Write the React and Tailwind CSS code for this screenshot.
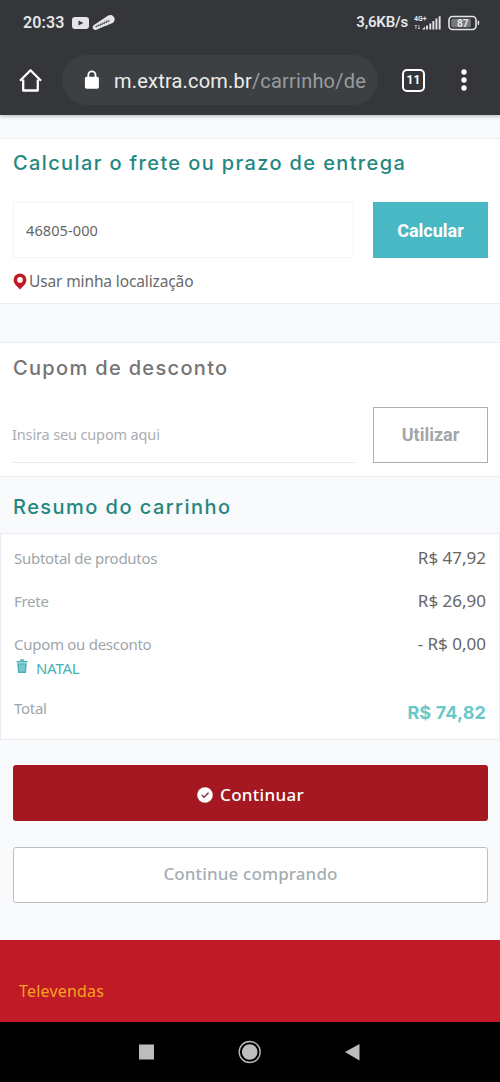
import { useState } from 'react';

const summary = [
    { label: 'Subtotal de produtos', value: 'R$ 47,92' },
    { label: 'Frete', value: 'R$ 26,90' },
    { label: 'Cupom ou desconto', value: '- R$ 0,00' },
];

function StatusBar() {
    return (
        <div className="h-[45px] flex items-center pl-[23px] pr-[20px] text-[#e4e5e7] font-['Roboto',sans-serif]">
            <span className="text-[16px] font-semibold tracking-[0.1px]">20:33</span>
            <svg className="ml-[8px] w-[17px] h-[12px]" viewBox="0 0 17 12">
                <rect width="17" height="12" rx="3" fill="currentColor" />
                <path d="M6.5 3.4 11.3 6 6.5 8.6Z" fill="#35363a" />
            </svg>
            <svg className="ml-[3px] w-[24px] h-[17px]" viewBox="0 0 24 17">
                <path d="M1.6 11.3 16.2 1.5C20.1-.6 24.8 4.1 21.7 8 20.2 9.8 16.2 10.5 4.5 15.8 1.3 16.8-.7 13.2 1.6 11.3Z" fill="currentColor" />
                <path d="m3.3 12.4 1.2.7.5-1.8 1.3 1 .5-1.8 1.4 1.2.5-2 1.5 1.2.5-2.2 1.6 1.2.5-2.3 1.6 1.4.4-2.4 1.8 1.4.3-2.2" fill="none" stroke="#5b5c60" strokeWidth="1" />
            </svg>
            <span className="ml-auto text-[15px] font-semibold tracking-[-0.2px]">3,6KB/s</span>
            <svg className="ml-[6px] w-[28px] h-[16px]" viewBox="0 0 28 16" fill="currentColor">
                <text x="0" y="6.4" fontSize="7" fontWeight="700" fontFamily="Roboto">4G+</text>
                <path d="M1.9 14V10M.9 11 1.9 10l1 1M4.9 10v4M3.9 13 4.9 14l1-1" fill="none" stroke="currentColor" strokeWidth=".7" />
                <path d="M8 14.5l3-3v3ZM12 10.5h1.9v4h-1.9ZM15.3 8.5h1.9v6h-1.9ZM18.4 6h1.9V14.5h-1.9ZM21.5 3.5h1.9v11h-1.9ZM24.7 1.2h1.9V14.5h-1.9Z" />
            </svg>
            <svg className="ml-[6px] w-[32px] h-[16px]" viewBox="0 0 32 16">
                <rect x="1" y="1.5" width="27" height="13" rx="3.5" fill="none" stroke="currentColor" strokeWidth="1.6" />
                <rect x="3.3" y="3.8" width="19.5" height="8.4" rx="1.5" fill="#77787b" />
                <path d="M30.4 5.8v4" stroke="currentColor" strokeWidth="1.5" />
                <text x="14.8" y="11.5" textAnchor="middle" fontSize="10" fontWeight="700" fontFamily="Roboto" fill="currentColor">87</text>
            </svg>
        </div>
    );
}

function AddressBar() {
    return (
        <div className="h-[70px] flex items-center pl-[18px] pr-[33px] font-['Roboto',sans-serif] text-white">
            <svg className="w-[26px] h-[26px]" viewBox="0 0 26 26" fill="none" stroke="currentColor" strokeWidth="2.3" strokeLinejoin="round">
                <path d="M2 13.8 12.5 3.3 23 13.8" />
                <path d="M5.2 12.5v11h14.6v-11" />
            </svg>
            <div className="ml-[18px] w-[316px] h-[50px] rounded-full bg-[#3c4043] flex items-center pl-[22px]">
                <svg className="w-[16px] h-[20px]" viewBox="0 0 16 20">
                    <rect x=".9" y="6.7" width="14" height="12" rx="1.7" fill="currentColor" />
                    <path d="M4.3 7.5V5a3.6 3.6 0 0 1 7.2 0v2.5" fill="none" stroke="currentColor" strokeWidth="1.8" />
                </svg>
                <span className="ml-[14px] pt-[1px] text-[20px] tracking-[0.2px] whitespace-nowrap text-[#eceded]">
                    m.extra.com.br<span className="text-[#999c9e]">/carrinho/de</span>
                </span>
            </div>
            <div className="ml-[24px] w-[23px] h-[23px] rounded-[5px] border-2 border-white flex items-center justify-center text-[12px] font-bold leading-none">11</div>
            <svg className="ml-auto w-[6px] h-[22px]" viewBox="0 0 6 22" fill="currentColor">
                <circle cx="3" cy="3" r="2.7" />
                <circle cx="3" cy="11" r="2.7" />
                <circle cx="3" cy="19" r="2.7" />
            </svg>
        </div>
    );
}

function NavigationBar() {
    return (
        <nav className="h-[60px] bg-black flex justify-center items-center text-[#bdbdbd]">
            <svg className="w-[224px] h-[24px]" viewBox="0 0 224 24" fill="currentColor">
                <rect x="1" y="4.5" width="15" height="15" />
                <circle cx="111.7" cy="12" r="7.8" />
                <circle cx="111.7" cy="12" r="10.5" fill="none" stroke="currentColor" strokeWidth="1.3" />
                <path d="M207 12 221.5 4v16.5Z" />
            </svg>
        </nav>
    );
}

export default function App() {
    const [cep, setCep] = useState('46805-000');
    const [coupon, setCoupon] = useState('');

    return (
        <div className="w-full h-[1082px] overflow-hidden flex flex-col bg-[#f8fafc] font-['Noto_Sans',sans-serif]">
            <header className="relative h-[115px] shrink-0 bg-[#35363a] shadow-[0_1px_4px_rgba(0,0,0,0.3)]">
                <StatusBar />
                <AddressBar />
            </header>

            <main className="h-[825px] shrink-0 pt-[23px]">
                <section className="h-[166px] bg-white border-y border-[#eceef1] pl-[13px] pr-[12px]">
                    <h2 className="pt-[9px] h-[63px] text-[20px] leading-[30px] font-medium font-['Inter',sans-serif] text-[#25877f] tracking-[1.37px] whitespace-nowrap">
                        Calcular o frete ou prazo de entrega
                    </h2>
                    <div className="flex justify-between">
                        <input
                            value={cep}
                            onChange={e => setCep(e.target.value)}
                            className="w-[341px] h-[56px] border border-[#f6f6f6] px-[12px] text-[14.5px] tracking-[0.1px] text-[#666]"
                        />
                        <button className="w-[115px] h-[56px] bg-[#48b8c5] text-white text-[18px] font-bold font-['Roboto',sans-serif]">Calcular</button>
                    </div>
                    <a className="flex items-center h-[46px] text-[15.5px] tracking-[-0.13px] text-[#696969]">
                        <svg className="w-[14px] h-[17px] mr-[2px]" viewBox="0 0 14 17">
                            <path d="M7 .5a6.4 6.4 0 0 0-6.4 6.4C.6 11 4.5 13.3 7 16.5 9.5 13.3 13.4 11 13.4 6.9A6.4 6.4 0 0 0 7 .5Z" fill="#be1925" />
                            <circle cx="7" cy="6.9" r="2.8" fill="#fff" />
                        </svg>
                        <span className="pt-[2px]">Usar minha localização</span>
                    </a>
                </section>

                <section className="mt-[38px] h-[135px] bg-white border-y border-[#e9ecf1] pl-[12px] pr-[12px]">
                    <h2 className="pt-[10px] pl-px h-[64px] text-[20px] leading-[30px] font-medium font-['Inter',sans-serif] text-[#747474] tracking-[1.33px] whitespace-nowrap">
                        Cupom de desconto
                    </h2>
                    <div className="flex justify-between">
                        <input
                            value={coupon}
                            onChange={e => setCoupon(e.target.value)}
                            placeholder="Insira seu cupom aqui"
                            className="w-[343px] h-[56px] pb-[1px] border-b border-[#e7e9eb] text-[14.5px] tracking-[-0.14px] placeholder:text-[#a9aeb2]"
                        />
                        <button className="w-[115px] h-[56px] pb-[2px] border border-[#adafb2] text-[#a2a6a9] text-[18px] font-bold font-['Roboto',sans-serif]">Utilizar</button>
                    </div>
                </section>

                <h2 className="h-[56px] px-[13px] pt-[15px] text-[20px] leading-[30px] font-medium font-['Inter',sans-serif] text-[#25877f] tracking-[1.45px]">
                    Resumo do carrinho
                </h2>
                <section className="h-[207px] bg-white border border-[#e9edf1] px-[13px] pt-[3px] text-[15px] tracking-[-0.28px] text-[#a0a6aa]">
                    {summary.map(row => (
                        <div key={row.label} className="h-[43px] flex items-center justify-between">
                            <span>{row.label}</span>
                            <span className="pb-[2px] text-[17px] tracking-normal text-[#666]">{row.value}</span>
                        </div>
                    ))}
                    <button className="h-[24px] -mt-[10px] flex items-center text-[#48b1b5]">
                        <svg className="ml-[2px] mr-[8px] mb-[3px] w-[12px] h-[15px]" viewBox="0 0 12 15">
                            <path d="M4 1h4M.5 2.8h11" stroke="currentColor" strokeWidth="1.6" />
                            <path d="M1.2 4.3h9.6L10 14H2Z" fill="currentColor" />
                            <path d="M4 5.5v7M6 5.5v7M8 5.5v7" stroke="#d9f2f3" strokeWidth=".7" />
                        </svg>
                        NATAL
                    </button>
                    <div className="h-[56px] flex items-center justify-between">
                        <span>Total</span>
                        <span className="pt-[9px] text-[18px] tracking-[0.15px] font-bold font-['Inter',sans-serif] text-[#6bc8c9]">R$ 74,82</span>
                    </div>
                </section>

                <div className="pt-[25px] pl-[13px] pr-[12px] flex flex-col gap-[26px] text-[17px] tracking-[0.12px] font-medium">
                    <button className="h-[56px] rounded-[3px] bg-[#a51721] text-white flex items-center justify-center pt-[4px]">
                        <svg className="w-[16px] h-[16px] mr-[7px]" viewBox="0 0 16 16">
                            <circle cx="8" cy="8" r="7.8" fill="#fff" />
                            <path d="m4.8 8 2.2 2.2 4.5-4.5" fill="none" stroke="#7e3343" strokeWidth="1.5" />
                        </svg>
                        <span className="tracking-[0.3px]">Continuar</span>
                    </button>
                    <button className="h-[56px] pb-[3px] rounded-[3px] border border-[#b9bfc6] bg-white text-[#a6adb2]">Continue comprando</button>
                </div>
            </main>

            <footer className="h-[82px] shrink-0 bg-[#c01a26] px-[19px] pt-[38px] text-[16px] leading-[26px] tracking-[0.2px] text-[#f7a320]">
                Televendas
            </footer>
            <NavigationBar />
        </div>
    );
}
